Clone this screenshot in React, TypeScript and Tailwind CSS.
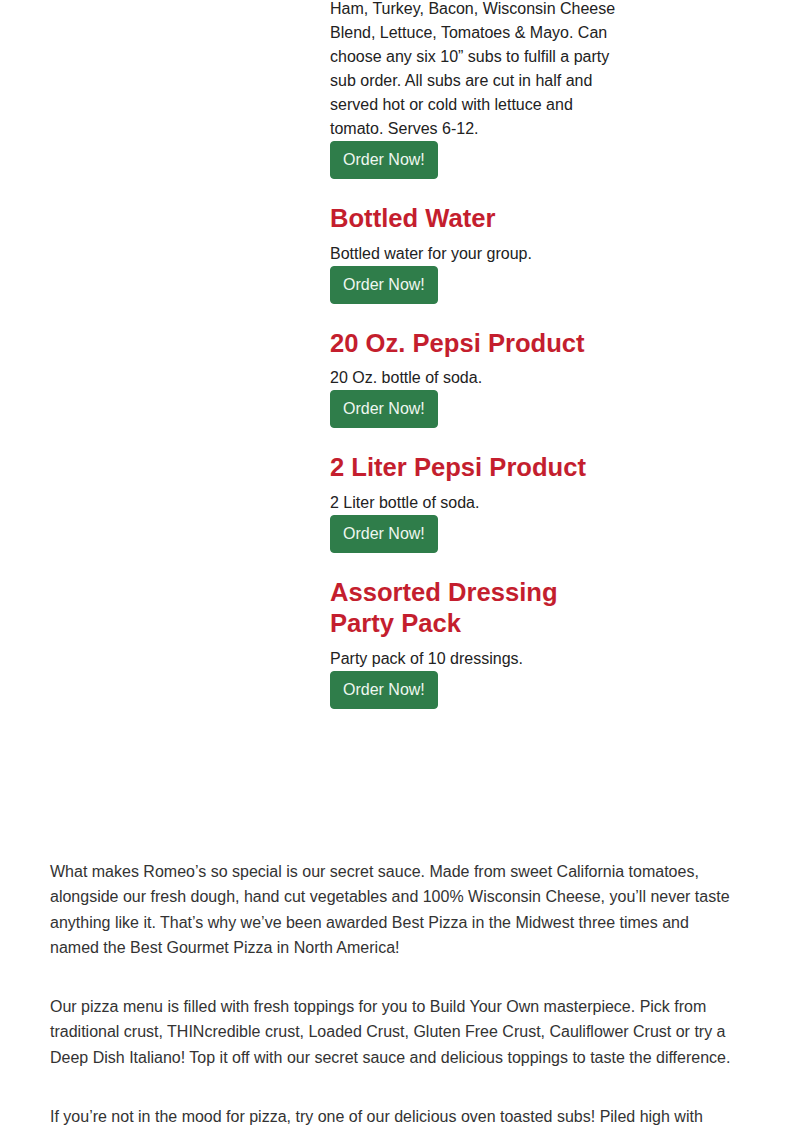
import React from "react";

const items = [
  {
    title: "Bottled Water",
    desc: "Bottled water for your group.",
  },
  {
    title: "20 Oz. Pepsi Product",
    desc: "20 Oz. bottle of soda.",
  },
  {
    title: "2 Liter Pepsi Product",
    desc: "2 Liter bottle of soda.",
  },
  {
    title: "Assorted Dressing Party Pack",
    desc: "Party pack of 10 dressings.",
  },
];

function OrderButton() {
  return (
    <button className="block rounded-[4px] border border-[#2f7d4a] bg-[#2f7d4a] px-3 py-[6px] text-[16px] leading-[24px] text-[#eef7f0]">
      Order Now!
    </button>
  );
}

export default function App() {
  return (
    <div
      className="bg-white text-[#222222]"
      style={{ fontFamily: '"Liberation Sans", Arial, sans-serif' }}
    >
      <div className="-mt-[3px] grid grid-cols-[280px_290px] px-[50px]">
        <div />
        <div className="flex flex-col">
          <div className="mb-[24px]">
            <p className="m-0 text-[16px] leading-[24px]">
              Ham, Turkey, Bacon, Wisconsin Cheese Blend, Lettuce, Tomatoes &amp; Mayo. Can choose any six 10” subs to fulfill a party sub order. All subs are cut in half and served hot or cold with lettuce and tomato. Serves 6-12.
            </p>
            <OrderButton />
          </div>
          {items.map((it) => (
            <div key={it.title} className="mb-[24px]">
              <h3 className="mb-[8px] text-[25.6px] font-bold leading-[1.2] text-[#c41e2e]">
                {it.title}
              </h3>
              <p className="m-0 text-[16px] leading-[24px]">{it.desc}</p>
              <OrderButton />
            </div>
          ))}
        </div>
      </div>
      <div className="mt-[126px] px-[50px] text-[16px] leading-[25.6px] text-[#333333]">
        <p className="mb-[33px]">
          What makes Romeo’s so special is our secret sauce. Made from sweet California tomatoes, alongside our fresh dough, hand cut vegetables and 100% Wisconsin Cheese, you’ll never taste anything like it. That’s why we’ve been awarded Best Pizza in the Midwest three times and named the Best Gourmet Pizza in North America!
        </p>
        <p className="mb-[33px]">
          Our pizza menu is filled with fresh toppings for you to Build Your Own masterpiece. Pick from traditional crust, THINcredible crust, Loaded Crust, Gluten Free Crust, Cauliflower Crust or try a Deep Dish Italiano! Top it off with our secret sauce and delicious toppings to taste the difference.
        </p>
        <p className="mb-[33px]">
          If you’re not in the mood for pizza, try one of our delicious oven toasted subs! Piled high with fresh meats, cheeses and vegetables, our subs are made to order.
        </p>
      </div>
    </div>
  );
}
